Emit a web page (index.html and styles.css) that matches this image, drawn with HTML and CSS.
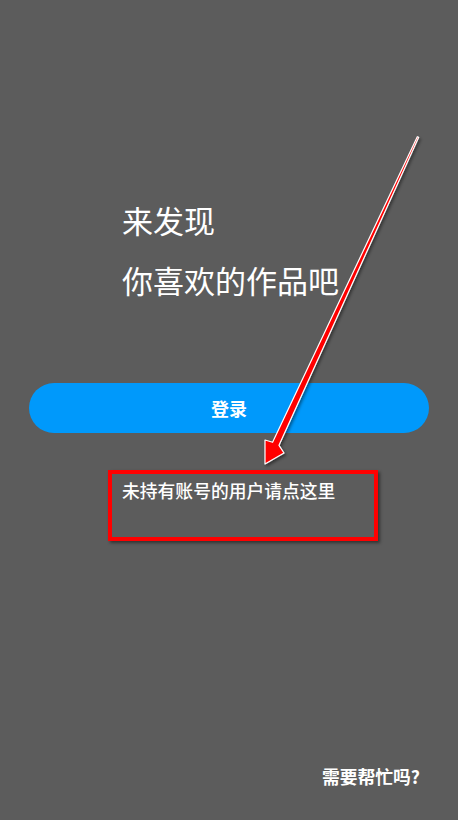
FILE: index.html
```html
<!DOCTYPE html>
<html lang="zh-CN">
<head>
  <meta charset="UTF-8">
  <meta name="viewport" content="width=device-width, initial-scale=1.0">
  <title>登录</title>
  <link rel="stylesheet" href="styles.css">
</head>
<body>
  <div class="screen">
    <div class="intro">
      <p class="intro-line">来发现</p>
      <p class="intro-line">你喜欢的作品吧</p>
    </div>

    <button class="login-btn">登录</button>

    <a class="signup-link" href="#">未持有账号的用户请点这里</a>

    <a class="help-link" href="#">需要帮忙吗?</a>

    <!-- annotation layer -->
    <div class="mark-box"></div>
    <svg class="mark-arrow" width="458" height="820" viewBox="0 0 458 820">
      <defs>
        <filter id="shadow" x="-20%" y="-20%" width="140%" height="140%">
          <feDropShadow dx="1.5" dy="2" stdDeviation="1.5" flood-color="#000" flood-opacity="0.45"/>
        </filter>
      </defs>
      <polygon filter="url(#shadow)"
        points="417.3,136.7 418.7,137.3 279.0,445.3 284,453 265,464 265,440 272.6,442.3"
        fill="#ff0000" stroke="#ffffff" stroke-width="1.2" stroke-linejoin="round"/>
    </svg>
  </div>
</body>
</html>
```

FILE: styles.css
```css
* {
  box-sizing: border-box;
  margin: 0;
  padding: 0;
}

body {
  background: #5c5c5c;
  font-family: "Noto Sans CJK SC", "Noto Sans", sans-serif;
  color: #fff;
}

.screen {
  position: relative;
  height: 820px;
  display: flex;
  flex-direction: column;
  padding: 0 29px;
}

.intro {
  padding: 190px 0 0 93px;
}

.intro-line {
  font-size: 31px;
  line-height: 59.5px;
  font-weight: 400;
}

.login-btn {
  margin-top: 74px;
  height: 50px;
  width: 100%;
  border: none;
  border-radius: 25px;
  background: #0099fb;
  color: #fff;
  font-family: inherit;
  font-size: 18px;
  font-weight: 700;
}

.signup-link {
  margin: 45px 0 0 93px;
  font-size: 17.8px;
  line-height: 24px;
  font-weight: 500;
  color: #fff;
  text-decoration: none;
}

.help-link {
  margin-top: auto;
  margin-bottom: 32px;
  margin-right: 9px;
  align-self: flex-end;
  font-size: 17.8px;
  line-height: 24px;
  font-weight: 700;
  color: #fff;
  text-decoration: none;
}

.mark-box {
  position: absolute;
  left: 108px;
  top: 470px;
  width: 270px;
  height: 71px;
  border: 4px solid #ff0000;
  box-shadow: 2px 2px 3px rgba(0, 0, 0, 0.45);
}

.mark-arrow {
  position: absolute;
  left: 0;
  top: 0;
  pointer-events: none;
}
```
